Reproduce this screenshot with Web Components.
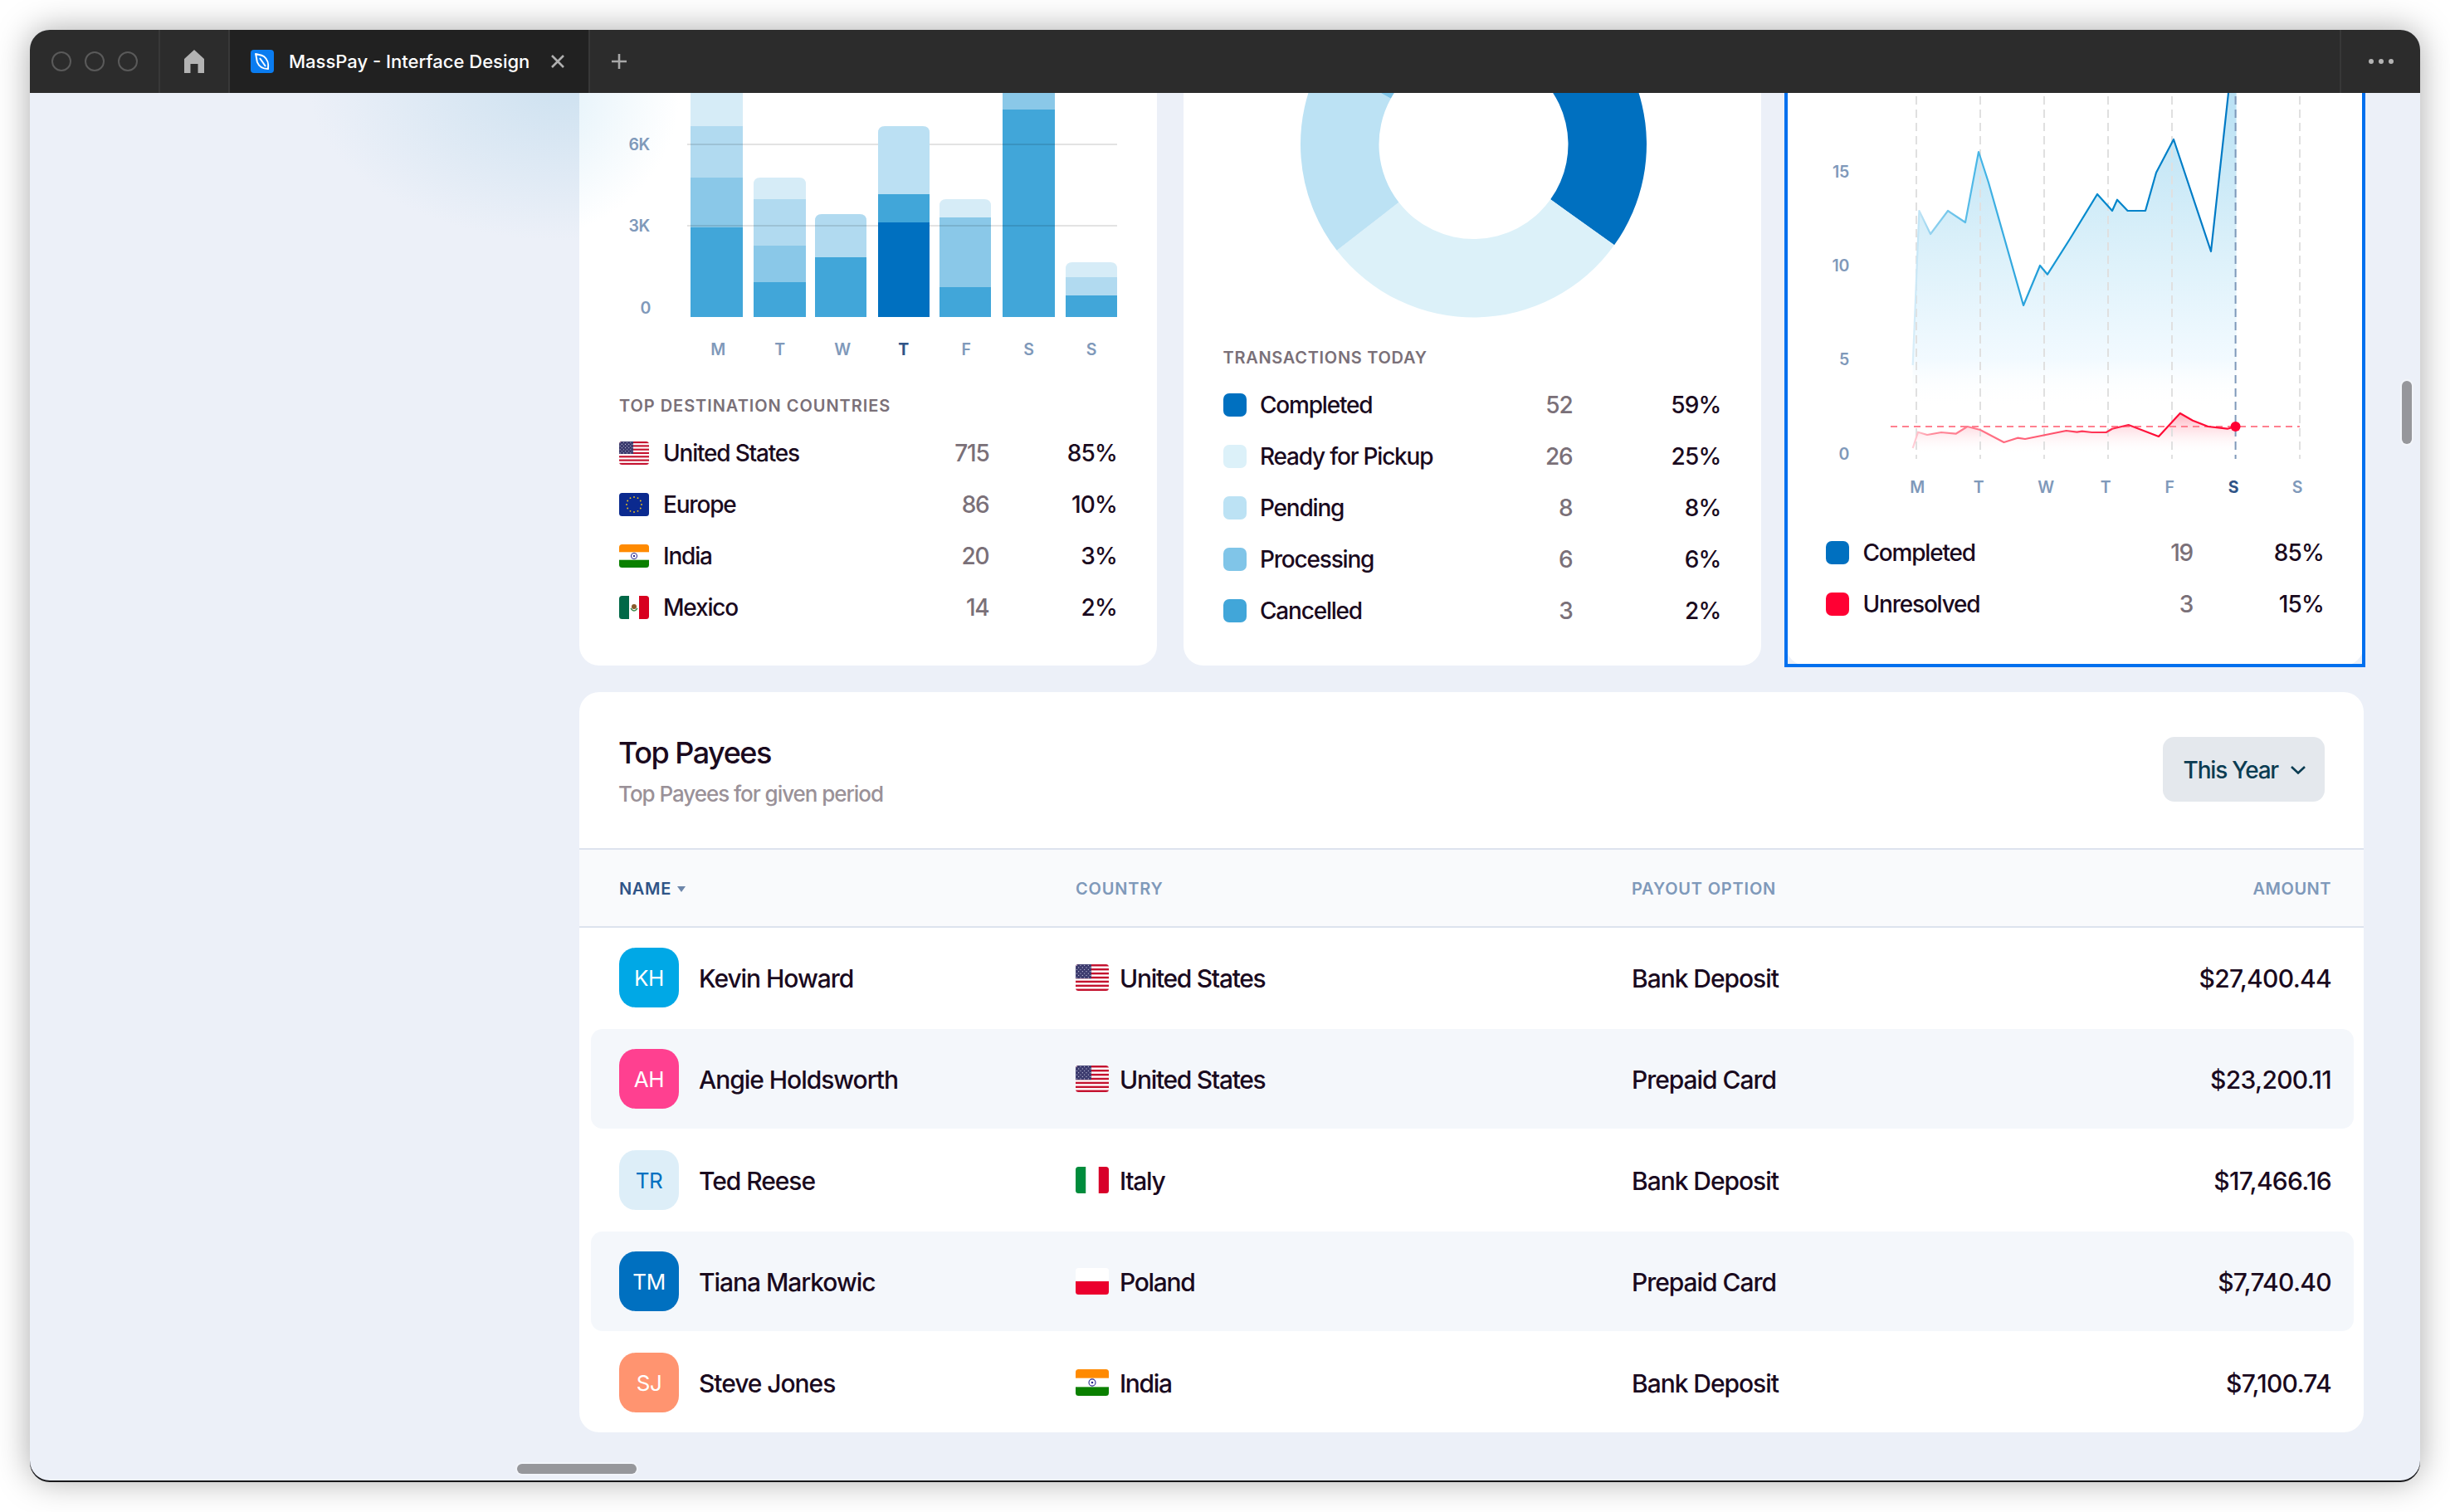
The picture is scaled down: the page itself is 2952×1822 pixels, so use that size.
<!DOCTYPE html>
<html lang="en"><head><meta charset="utf-8"><title>MassPay - Interface Design</title>
<style>
html,body{margin:0;background:#fff;overflow:hidden}
body{width:2952px;height:1822px;box-sizing:border-box;padding:36px 36px 0;font-family:Inter,"Liberation Sans",sans-serif;color:#1a0a1e}
</style></head><body>
<x-window>
  <x-titlebar slot="bar" title-text="MassPay - Interface Design"></x-titlebar>
  <x-stats>
    <x-card caption="TOP DESTINATION COUNTRIES" style="--num:80px;--pct:154.5px;--chart-gap:26px;--glow:1;--cap:.95px">
      <x-bar-chart slot="chart"></x-bar-chart>
      <x-row num="715" pct="85%" style="--gap:17px"><x-flag slot="icon" code="us"></x-flag>United States</x-row>
      <x-row num="86" pct="10%" style="--gap:17px"><x-flag slot="icon" code="eu"></x-flag>Europe</x-row>
      <x-row num="20" pct="3%" style="--gap:17px"><x-flag slot="icon" code="in"></x-flag>India</x-row>
      <x-row num="14" pct="2%" style="--gap:17px"><x-flag slot="icon" code="mx"></x-flag>Mexico</x-row>
    </x-card>
    <x-card caption="TRANSACTIONS TODAY" style="--num:80px;--pct:179px;--chart-gap:0px;--cap:.7px;margin:0 -.5px 0 .5px">
      <x-donut slot="chart"></x-donut>
      <x-row num="52" pct="59%"><x-swatch slot="icon" color="#0070c0"></x-swatch>Completed</x-row>
      <x-row num="26" pct="25%"><x-swatch slot="icon" color="#dcf1f9"></x-swatch>Ready for Pickup</x-row>
      <x-row num="8" pct="8%"><x-swatch slot="icon" color="#bce2f4"></x-swatch>Pending</x-row>
      <x-row num="6" pct="6%"><x-swatch slot="icon" color="#80c5e8"></x-swatch>Processing</x-row>
      <x-row num="3" pct="2%"><x-swatch slot="icon" color="#41a6d9"></x-swatch>Cancelled</x-row>
    </x-card>
    <x-card selected style="--num:80px;--pct:158px;--chart-gap:23px">
      <x-line-chart slot="chart"></x-line-chart>
      <x-row num="19" pct="85%"><x-swatch slot="icon" color="#0070c0"></x-swatch>Completed</x-row>
      <x-row num="3" pct="15%"><x-swatch slot="icon" color="#ff0033"></x-swatch>Unresolved</x-row>
    </x-card>
  </x-stats>
  <x-payees>
    <x-payee initials="KH" bg="#00a8e6" name="Kevin Howard" code="us" country="United States" option="Bank Deposit" amount="$27,400.44"></x-payee>
    <x-payee striped initials="AH" bg="#ff4090" name="Angie Holdsworth" code="us" country="United States" option="Prepaid Card" amount="$23,200.11"></x-payee>
    <x-payee initials="TR" bg="#ddeef8" fg="#0070c0" name="Ted Reese" code="it" country="Italy" option="Bank Deposit" amount="$17,466.16"></x-payee>
    <x-payee striped initials="TM" bg="#0070c0" name="Tiana Markowic" code="pl" country="Poland" option="Prepaid Card" amount="$7,740.40"></x-payee>
    <x-payee initials="SJ" bg="#ff9470" name="Steve Jones" code="in" country="India" option="Bank Deposit" amount="$7,100.74"></x-payee>
  </x-payees>
</x-window>
<script>
const def=(name,html)=>{
  customElements.define(name,class extends HTMLElement{
    connectedCallback(){
      if(this.shadowRoot)return;
      const a=n=>this.getAttribute(n)||'';
      this.attachShadow({mode:'open'}).innerHTML=typeof html==='function'?html(a,this):html;
    }
  });
};

def('x-window',`<style>
:host{display:flex;flex-direction:column;position:relative;width:2880px;height:1748px;border-radius:24px;overflow:hidden;
background:#ecf0f8;box-shadow:0 2px 0 #17171a,0 0 40px rgba(0,0,0,.34)}
.bar{position:relative;z-index:3;flex:none}
.body{flex:1;display:flex;flex-direction:column;gap:32px;padding:0 68px 0 662px;
background:radial-gradient(ellipse 310px 190px at 645px -12px,#cfe2f0 0,#d1e3f1 12%,rgba(209,227,241,0) 100%)}
.sb{position:absolute;background:#96979b;border-radius:6px;box-shadow:0 0 0 2px rgba(255,255,255,.35);z-index:2}
.v{left:2858px;top:423px;width:12px;height:76px}
.h{left:587px;top:1728px;width:144px;height:12px}
</style><div class="bar"><slot name="bar"></slot></div><div class="body"><slot></slot></div><div class="sb v"></div><div class="sb h"></div>`);

def('x-titlebar',(a)=>`<style>
:host{display:flex;height:76px;background:#2c2c2c;color:#fff;align-items:stretch;font:500 22px Inter,"Liberation Sans",sans-serif}
.lights{width:157px;box-sizing:border-box;display:flex;align-items:center;gap:16px;padding-left:26px;border-right:2px solid #383838}
.lights i{width:24px;height:24px;box-sizing:border-box;border:2px solid #5a5a5a;border-radius:50%}
.home{width:82px;box-sizing:border-box;display:flex;align-items:center;justify-content:center}
.tab{width:436px;box-sizing:border-box;background:#212121;display:flex;align-items:center;padding-left:25px;border-left:2px solid #383838;border-right:2px solid #383838}
.logo{width:28px;height:28px;flex:none;margin-right:18px}
.name{width:315px;white-space:nowrap}
.plus{width:70px;display:flex;align-items:center;justify-content:center}
.sp{flex:1}
.more{width:97px;box-sizing:border-box;border-left:2px solid #383838;display:flex;align-items:center;justify-content:center;gap:6px}
.more i{width:6px;height:6px;border-radius:50%;background:#b3b3b3}
svg{display:block}
</style>
<div class="lights"><i></i><i></i><i></i></div>
<div class="home"><svg width="24" height="28" viewBox="0 0 24 28"><path fill="#b3b3b3" d="M12 0 L24 11 V28 H16.5 V17 H7.5 V28 H0 V11 Z"/></svg></div>
<div class="tab"><svg class="logo" viewBox="0 0 28 28"><rect width="28" height="28" rx="4" fill="#0a7cf0"/><path fill="none" stroke="#fff" stroke-width="2" stroke-linejoin="round" d="M6 5 C10 6 13 6 16 8 C20 11 22 17 21 23 C15 23 10 20 8 15 C7 11 7 8 6 5Z M11 10 L18 20"/></svg>
<span class="name">${a('title-text')}</span>
<svg width="18" height="16" viewBox="0 0 18 16"><path stroke="#b0b0b0" stroke-width="2.6" d="M2 1 L16 15 M16 1 L2 15"/></svg></div>
<div class="plus"><svg width="18" height="18" viewBox="0 0 18 18"><path stroke="#a8a8a8" stroke-width="2.6" d="M9 0V18M0 9H18"/></svg></div>
<div class="sp"></div>
<div class="more"><i></i><i></i><i></i></div>`);

def('x-stats',`<style>:host{display:grid;grid-template-columns:repeat(3,1fr);gap:31px;height:690px;flex:none}</style><slot></slot>`);

def('x-card',(a,el)=>`<style>
:host{display:flex;flex-direction:column;position:relative;box-sizing:border-box;border-radius:0 0 24px 24px;
background:${el.style.getPropertyValue('--glow')?'radial-gradient(circle 180px at -58px -6px,#e2f0f9 0,#eaf5fb 35%,#fff 100%)':'#fff'}}
.chart{display:block;margin-bottom:var(--chart-gap)}
.cap{height:30px;line-height:30px;margin:0 48px 11px;font-weight:600;font-size:20px;letter-spacing:var(--cap,.8px);color:#7a7078;white-space:nowrap}
.rows{display:flex;flex-direction:column}
.sel{position:absolute;left:-2px;right:-2px;top:-10px;bottom:-2px;border:4px solid #0070ee;pointer-events:none}
</style><div class="chart"><slot name="chart"></slot></div>
${a('caption')?`<div class="cap">${a('caption')}</div>`:''}
<div class="rows"><slot></slot></div>${el.hasAttribute('selected')?'<div class="sel"></div>':''}`);

def('x-row',(a)=>`<style>
:host{display:grid;grid-template-columns:1fr var(--num) var(--pct);align-items:center;height:62px;box-sizing:border-box;padding:0 48px;font-size:28px;font-weight:500;letter-spacing:-1.2px;color:#1a0a1e;white-space:nowrap}
.n{display:flex;align-items:center;gap:var(--gap,16.5px)}
.v{text-align:right;color:#7a7078}.p{text-align:right;letter-spacing:-.8px}
</style><div class="n"><slot name="icon"></slot><span><slot></slot></span></div><div class="v">${a('num')}</div><div class="p">${a('pct')}</div>`);

def('x-swatch',(a)=>`<style>:host{display:block;width:28px;height:28px;border-radius:7px;background:${a('color')}}</style>`);

const star=(cx,cy,r,n,col,s)=>Array.from({length:n},(_,i)=>{const t=i/n*Math.PI*2;return `<circle cx="${(cx+r*Math.cos(t)).toFixed(2)}" cy="${(cy+r*Math.sin(t)).toFixed(2)}" r="${s}" fill="${col}"/>`}).join('');
const FLAGS={
 us:()=>{let s='<rect width="36" height="28" fill="#fff"/>';for(let i=0;i<7;i++)s+=`<rect y="${(i*2*28/13).toFixed(2)}" width="36" height="${(28/13).toFixed(2)}" fill="#c4122f"/>`;
   s+='<rect width="17" height="15" fill="#3c3b6e"/>';for(let y=0;y<7;y++)for(let x=0;x<8;x++)if((x+y)%2==0)s+=`<circle cx="${1.2+x*2.1}" cy="${1.3+y*2.1}" r=".55" fill="#c9cbe0"/>`;return s},
 eu:()=>`<rect width="36" height="28" fill="#0b2a8f"/>`+star(18,14,9,12,'#f5c518',.9),
 in:()=>`<rect width="36" height="28" fill="#fff"/><rect width="36" height="9.3" fill="#ff8a00"/><rect y="18.7" width="36" height="9.3" fill="#0a8000"/><circle cx="18" cy="14" r="3.6" fill="none" stroke="#2a2a90" stroke-width="1"/><circle cx="18" cy="14" r="1.2" fill="#2a2a90"/>`,
 mx:()=>`<rect width="36" height="28" fill="#fff"/><rect width="12" height="28" fill="#006847"/><rect x="24" width="12" height="28" fill="#d8001f"/><circle cx="18" cy="13" r="3" fill="#8a5a2b"/><path d="M14 15 Q18 21 22 15" fill="none" stroke="#3d8a4a" stroke-width="1.4"/>`,
 it:()=>`<rect width="36" height="28" fill="#fff"/><rect width="11" height="28" fill="#008c3c"/><rect x="25" width="11" height="28" fill="#d8002a"/>`,
 pl:()=>`<rect width="36" height="14" fill="#fff"/><rect y="14" width="36" height="14" fill="#eb002d"/>`
};
def('x-flag',(a)=>`<style>:host{display:block;flex:none;width:var(--w,36px);height:var(--h,28px)}svg{display:block;width:100%;height:100%;border-radius:3.5px}</style>
<svg viewBox="0 0 36 28" preserveAspectRatio="none">${FLAGS[a('code')]()}</svg>`);

const AXIS=`<style>:host{display:block}svg{display:block}
text{font-size:19.5px;font-weight:600;fill:#7f99ba;font-family:Inter,"Liberation Sans",sans-serif;letter-spacing:-.3px}
text.d{fill:#2f5487;font-weight:700}</style>`;
const seg=(x,w,y0,y1,c,round)=>round
 ?`<path fill="${c}" d="M${x} ${y1}V${y0+8}q0 -8 8 -8H${x+w-8}q8 0 8 8V${y1}Z"/>`
 :`<rect x="${x}" y="${y0}" width="${w}" height="${y1-y0}" fill="${c}"/>`;
const B='#41a6d9',M='#8ac8e8',L='#b1daf0',P='#d6ecf7';
def('x-bar-chart',()=>{
 const cols=[
  [832,63,[[274,382,B],[214,274,M],[152,214,L],[100,152,P]]],
  [908,63,[[340,382,B],[296,340,M],[240,296,L],[214,240,P,1]]],
  [982,62,[[310,382,B],[258,310,L,1]]],
  [1132,62,[[346,382,B],[262,346,M],[240,262,P,1]]],
  [1208,63,[[132,382,B],[100,132,M]]],
  [1284,62,[[356,382,B],[334,356,L],[316,334,P,1]]]];
 const bars=cols.map(([x,w,s])=>s.map(([a,b,c,r])=>seg(x,w,a,b,c,r)).join('')).join('');
 const lab=[['M',865],['T',939.6],['W',1015],['T',1088.5,1],['F',1164],['S',1239.5],['S',1315]]
  .map(([t,x,d])=>`<text x="${x}" y="428" text-anchor="middle" class="${d?'d':''}">${t}</text>`).join('');
 return `${AXIS}
 <svg width="696" height="336" viewBox="698 112 696 336">
 ${bars}
 <path d="M828 174H1346M828 272H1346" stroke="rgba(0,0,0,.11)" stroke-width="2"/>
 ${seg(1058,62,268,382,'#0070c0')}${seg(1058,62,234,268,B)}${seg(1058,62,152,234,'#bbe0f3',1)}
 <text x="783" y="181" text-anchor="end">6K</text>
 <text x="783" y="279" text-anchor="end">3K</text>
 <text x="784" y="378" text-anchor="end">0</text>
 ${lab}</svg>`});

def('x-donut',()=>{
 const cx=1775,cy=174,R=208.5,r=114,p=(rad,d)=>{const t=d*Math.PI/180;return (cx+rad*Math.cos(t)).toFixed(2)+' '+(cy+rad*Math.sin(t)).toFixed(2)};
 const arc=(a,b,c)=>`<path fill="${c}" d="M${p(R,a)}A${R} ${R} 0 ${b-a>180?1:0} 1 ${p(R,b)}L${p(r,b)}A${r} ${r} 0 ${b-a>180?1:0} 0 ${p(r,a)}Z"/>`;
 return `<style>:host{display:block}svg{display:block}</style><svg width="696" height="304" viewBox="1425.5 112 696 304">
 ${arc(-62,35.6,'#0070c0')}${arc(35.6,142.2,'#dcf1f9')}${arc(142.2,209,'#bce2f4')}${arc(209,298,'#80c5e8')}</svg>`});

def('x-line-chart',()=>{
 const blue=[[2304.7,440],[2312.4,254],[2326,282],[2347,254],[2368,268],[2384,183],[2396,220],[2438,368],[2458,320],[2467,330.7],[2494,288],[2527,234],[2545,254],[2551,240.7],[2563.6,254],[2585,254],[2598,208],[2619,168],[2664,303],[2685,112],[2694.6,30]];
 const red=[[2304.7,540],[2311,520.7],[2322,524],[2339,521],[2356.5,522.7],[2370.5,514],[2386,518],[2414.5,533],[2431,527.7],[2440,529],[2489.6,519],[2502.5,520.7],[2508.7,519.7],[2520.6,521],[2537.7,521],[2545,516.7],[2564.6,512],[2601,526],[2626.8,498],[2642,506.7],[2660.5,514],[2683.8,516.7],[2693.6,514]];
 const pts=a=>a.map(p=>p.join(',')).join(' ');
 const grid=[2309,2386,2463,2540,2617,2771].map(x=>`<path d="M${x} 100V553" stroke="#e0e0e0" stroke-width="2" stroke-dasharray="10 6"/>`).join('');
 const lab=[['M',2310],['T',2384],['W',2465],['T',2537],['F',2614],['S',2691,1],['S',2768]]
  .map(([t,x,d])=>`<text x="${x}" y="594" text-anchor="middle" class="${d?'d':''}">${t}</text>`).join('');
 const yl=[['15',214],['10',327],['5',440],['0',554]].map(([t,y])=>`<text x="2228" y="${y}" text-anchor="end">${t}</text>`).join('');
 return `${AXIS}<svg width="696" height="500" viewBox="2152 112 696 500">
 <defs>
 <linearGradient id="bf" gradientUnits="userSpaceOnUse" x1="0" y1="112" x2="0" y2="490"><stop offset="0" stop-color="#b9e1f4"/><stop offset=".45" stop-color="#d8eff9"/><stop offset=".85" stop-color="#f2faff"/><stop offset="1" stop-color="#fff" stop-opacity="0"/></linearGradient>
 <linearGradient id="bs" gradientUnits="userSpaceOnUse" x1="2305" y1="0" x2="2694" y2="0"><stop offset="0" stop-color="#d9eef9"/><stop offset=".06" stop-color="#8ed0ee"/><stop offset=".2" stop-color="#48b6e6"/><stop offset=".55" stop-color="#0088cc"/><stop offset="1" stop-color="#0078c4"/></linearGradient>
 <linearGradient id="rf" gradientUnits="userSpaceOnUse" x1="0" y1="498" x2="0" y2="546"><stop offset="0" stop-color="#ffb0bd"/><stop offset="1" stop-color="#fff" stop-opacity="0"/></linearGradient>
 <linearGradient id="rs" gradientUnits="userSpaceOnUse" x1="2305" y1="0" x2="2694" y2="0"><stop offset="0" stop-color="#ffd0d8"/><stop offset=".06" stop-color="#ff8a9a"/><stop offset=".4" stop-color="#ff5a72"/><stop offset=".75" stop-color="#ff0a35"/></linearGradient>
 </defs>
 <polygon fill="url(#bf)" points="${pts(blue)} 2694.6,490 2304.7,490"/>
 <polygon fill="url(#rf)" points="${pts(red)} 2693.6,548 2304.7,548"/>
 ${grid}<path d="M2693.6 100V553" stroke="#7f99ba" stroke-width="2" stroke-dasharray="10 6"/>
 <polyline fill="none" stroke="url(#bs)" stroke-width="2.2" stroke-linejoin="round" points="${pts(blue)}"/>
 <path d="M2278 514H2771" stroke="#ff8090" stroke-width="2" stroke-dasharray="8 6"/>
 <polyline fill="none" stroke="url(#rs)" stroke-width="2.2" stroke-linejoin="round" points="${pts(red)}"/>
 <circle cx="2693.6" cy="514" r="6" fill="#ff0033"/>
 ${yl}${lab}</svg>`});

def('x-dropdown',(a)=>`<style>
:host{display:flex;align-items:center;gap:14px;height:78px;box-sizing:border-box;padding:2px 22px 0 25px;background:#e4e8ed;border-radius:14px;color:#0b3c52;font-size:28px;font-weight:500;letter-spacing:-1.2px;white-space:nowrap}
svg{display:block}</style><slot></slot><svg width="20" height="10" viewBox="0 0 20 10"><path d="M2 1 L10 8.5 L18 1" fill="none" stroke="#0b3c52" stroke-width="2.6"/></svg>`);

def('x-payees',`<style>
:host{display:flex;flex-direction:column;flex:none;height:892px;background:#fff;border-radius:24px;overflow:hidden}
header{display:flex;justify-content:space-between;height:188px;box-sizing:border-box;padding:53px 47px 0 47px}
x-dropdown{margin-top:1px}
h2{margin:0;font-size:36px;font-weight:500;line-height:40px;color:#1a0a1e;letter-spacing:-1.5px}
p{margin:13px 0 0;font-size:26px;line-height:34px;color:#9a9198;font-weight:500;letter-spacing:-1.05px}
.th{display:grid;grid-template-columns:550px 670px 1fr auto;align-items:center;height:96px;box-sizing:border-box;padding:2px 39px 0 48px;background:#f9fafc;border-top:2px solid #dde3ee;border-bottom:2px solid #dde3ee;
font-size:20px;font-weight:600;letter-spacing:.8px;color:#7f99ba}
.sort{color:#2f5487;display:flex;align-items:center;gap:7px;letter-spacing:.65px}
.amt{text-align:right;letter-spacing:.5px}
.rows{display:flex;flex-direction:column;gap:2px;padding:0 12px 0 14px}
svg{display:block}
</style>
<header><div><h2>Top Payees</h2><p>Top Payees for given period</p></div><x-dropdown>This Year</x-dropdown></header>
<div class="th"><div class="sort">NAME<svg width="10" height="7" viewBox="0 0 10 7"><path d="M0 0H10L5 7Z" fill="#6d86aa"/></svg></div><div>COUNTRY</div><div>PAYOUT OPTION</div><div class="amt">AMOUNT</div></div>
<div class="rows"><slot></slot></div>`);

def('x-payee',(a,el)=>`<style>
:host{display:grid;grid-template-columns:550px 670px 1fr auto;align-items:center;height:120px;box-sizing:border-box;padding:0 27px 0 34px;border-radius:14px;font-size:30px;font-weight:500;letter-spacing:-1.3px;color:#1a0a1e;white-space:nowrap;background:${el.hasAttribute('striped')?'#f4f7fb':'transparent'}}
.c{display:flex;align-items:center}
.t{padding-top:1px}
.w{letter-spacing:-1.05px}
.av{width:72px;height:72px;border-radius:20px;display:flex;align-items:center;justify-content:center;font-size:26px;font-weight:400;letter-spacing:-.5px;background:${a('bg')};color:${a('fg')||'#fff'};margin-right:24px}
.f{margin-right:13px;--w:40px;--h:32px}
.amt{text-align:right;letter-spacing:-.7px}
</style><div class="c"><div class="av">${a('initials')}</div><span class="t w">${a('name')}</span></div>
<div class="c"><x-flag class="f" code="${a('code')}"></x-flag><span class="t">${a('country')}</span></div><div class="t w">${a('option')}</div><div class="amt t">${a('amount')}</div>`);
</script>
</body></html>
